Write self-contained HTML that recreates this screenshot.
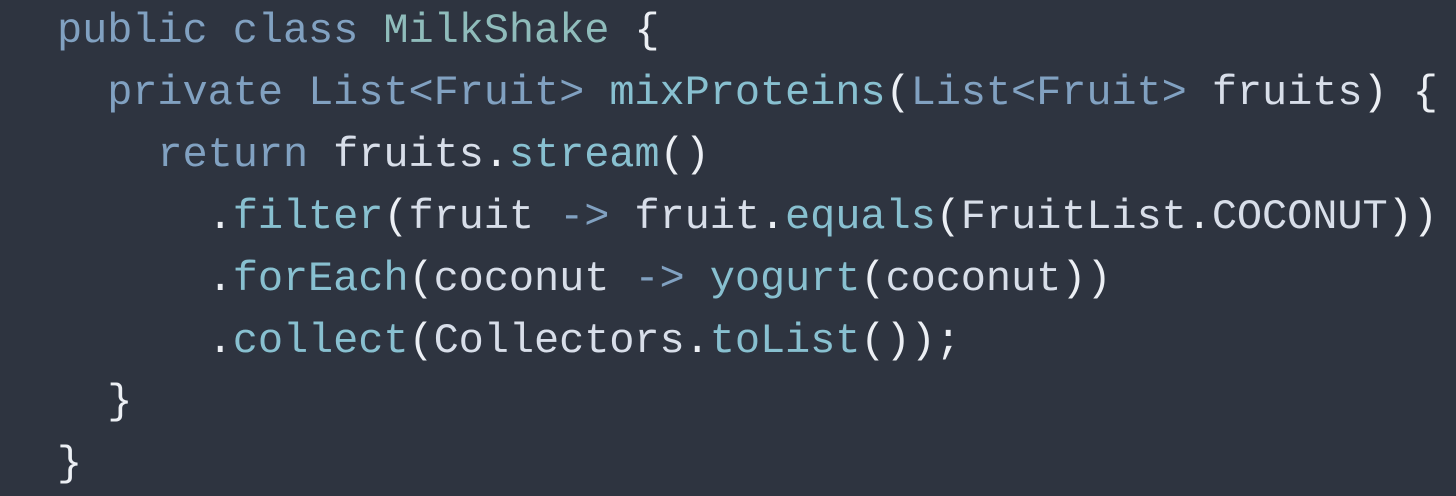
<!DOCTYPE html>
<html><head><style>
html,body{margin:0;padding:0;background:#2e3440;width:1456px;height:486px;overflow:hidden}
pre{margin:0;position:absolute;left:57px;top:1px;font-family:"Liberation Mono",monospace;font-size:42px;line-height:61.9px;color:#d8dee9;letter-spacing:-0.1px}
.k{color:#81a1c1}.c{color:#8fbcbb}.f{color:#88c0d0}.p{color:#eceff4}
</style></head><body>
<pre><span class="k">public</span> <span class="k">class</span> <span class="c">MilkShake</span> <span class="p">{</span>
  <span class="k">private</span> <span class="k">List&lt;Fruit&gt;</span> <span class="f">mixProteins</span><span class="p">(</span><span class="k">List&lt;Fruit&gt;</span> fruits<span class="p">)</span> <span class="p">{</span>
    <span class="k">return</span> fruits<span class="p">.</span><span class="f">stream</span><span class="p">()</span>
      <span class="p">.</span><span class="f">filter</span><span class="p">(</span>fruit <span class="k">-&gt;</span> fruit<span class="p">.</span><span class="f">equals</span><span class="p">(</span>FruitList<span class="p">.</span>COCONUT<span class="p">))</span>
      <span class="p">.</span><span class="f">forEach</span><span class="p">(</span>coconut <span class="k">-&gt;</span> <span class="f">yogurt</span><span class="p">(</span>coconut<span class="p">))</span>
      <span class="p">.</span><span class="f">collect</span><span class="p">(</span>Collectors<span class="p">.</span><span class="f">toList</span><span class="p">());</span>
  <span class="p">}</span>
<span class="p">}</span></pre>
</body></html>
